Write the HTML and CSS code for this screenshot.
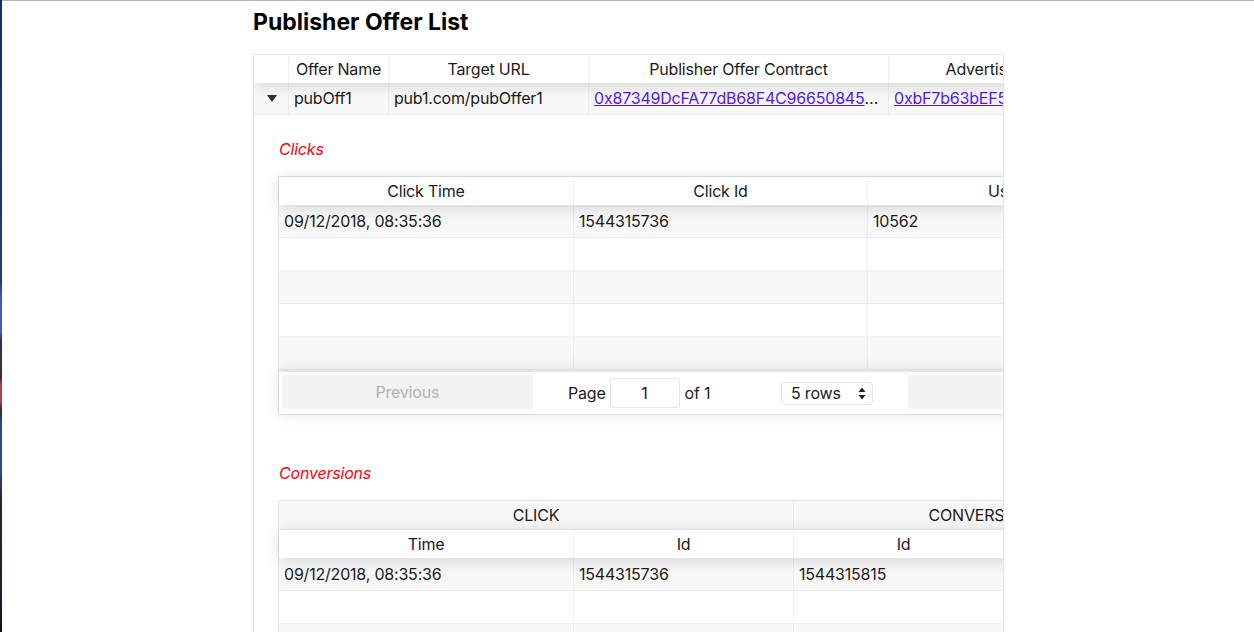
FILE: index.html
```html
<!DOCTYPE html>
<html>
<head>
<meta charset="utf-8">
<title>Publisher Offer List</title>
<link rel="stylesheet" href="styles.css">
</head>
<body>
<div class="screen">
  <div class="wall"></div>
  <div class="window">
    <h2 class="title">Publisher Offer List</h2>
    <div class="rt outer">
      <div class="rt-inner outer-inner">
        <div class="thead">
          <div class="th c-exp"></div>
          <div class="th c-name">Offer Name</div>
          <div class="th c-url">Target URL</div>
          <div class="th c-con">Publisher Offer Contract</div>
          <div class="th c-adv">Advertiser Offer Contract</div>
        </div>
        <div class="tr-group">
          <div class="tr odd outer-row">
            <div class="td c-exp"><span class="expander"></span></div>
            <div class="td c-name">pubOff1</div>
            <div class="td c-url">pub1.com/pubOffer1</div>
            <div class="td c-con"><a class="addr" href="#">0x87349DcFA77dB68F4C966508456e3a2B1c9F0d7E</a></div>
            <div class="td c-adv"><a class="addr" href="#">0xbF7b63bEF5a8C21d04E9b3F76a1D2c8e90B4f1A3</a></div>
          </div>
          <div class="sub">
            <div class="label first">Clicks</div>
            <div class="rt subtable clicks">
              <div class="thead">
                <div class="th k1">Click Time</div>
                <div class="th k2">Click Id</div>
                <div class="th k3">User Id</div>
              </div>
              <div class="tbody">
                <div class="tr odd"><div class="td k1">09/12/2018, 08:35:36</div><div class="td k2">1544315736</div><div class="td k3">10562</div></div>
                <div class="tr"><div class="td k1">&nbsp;</div><div class="td k2">&nbsp;</div><div class="td k3">&nbsp;</div></div>
                <div class="tr odd"><div class="td k1">&nbsp;</div><div class="td k2">&nbsp;</div><div class="td k3">&nbsp;</div></div>
                <div class="tr"><div class="td k1">&nbsp;</div><div class="td k2">&nbsp;</div><div class="td k3">&nbsp;</div></div>
                <div class="tr odd"><div class="td k1">&nbsp;</div><div class="td k2">&nbsp;</div><div class="td k3">&nbsp;</div></div>
              </div>
              <div class="pagination">
                <div class="pg-prev"><div class="btn">Previous</div></div>
                <div class="pg-center">
                  <div class="page-info">Page <input class="page-jump" type="text" value="1" readonly> of 1</div>
                  <div class="page-size">
                    <div class="fake-select">5 rows
                      <svg class="updown" width="8" height="13" viewBox="0 0 8 13"><path d="M4 0.5 L7.5 5 L0.5 5 Z M4 12.5 L7.5 8 L0.5 8 Z" fill="#222"/></svg>
                    </div>
                  </div>
                </div>
                <div class="pg-next"><div class="btn">Next</div></div>
              </div>
            </div>

            <div class="label second">Conversions</div>
            <div class="rt subtable conv">
              <div class="thead groups">
                <div class="th g1">CLICK</div>
                <div class="th g2">CONVERSION</div>
              </div>
              <div class="thead">
                <div class="th v1">Time</div>
                <div class="th v2">Id</div>
                <div class="th v3">Id</div>
                <div class="th v4">Amount</div>
              </div>
              <div class="tbody">
                <div class="tr odd"><div class="td v1">09/12/2018, 08:35:36</div><div class="td v2">1544315736</div><div class="td v3">1544315815</div><div class="td v4">&nbsp;</div></div>
                <div class="tr"><div class="td v1">&nbsp;</div><div class="td v2">&nbsp;</div><div class="td v3">&nbsp;</div><div class="td v4">&nbsp;</div></div>
                <div class="tr odd"><div class="td v1">&nbsp;</div><div class="td v2">&nbsp;</div><div class="td v3">&nbsp;</div><div class="td v4">&nbsp;</div></div>
                <div class="tr"><div class="td v1">&nbsp;</div><div class="td v2">&nbsp;</div><div class="td v3">&nbsp;</div><div class="td v4">&nbsp;</div></div>
              </div>
            </div>
          </div>
        </div>
      </div>
    </div>
  </div>
</div>
</body>
</html>
```

FILE: styles.css
```css
* { box-sizing: border-box; }
html, body { margin: 0; padding: 0; }
body {
  font-family: Inter, "Liberation Sans", sans-serif;
  font-size: 16px;
  letter-spacing: -0.2px;
  color: #1a1a1a;
  background: #fff;
  overflow: hidden;
}
.screen {
  display: flex;
  height: 632px;
  overflow: hidden;
}
.wall {
  flex: none;
  width: 2px;
  background: linear-gradient(to bottom,
    #1b2b66 0px, #22387a 280px, #3b62ad 300px, #3b62ad 333px,
    #3b2c48 340px, #3b2c48 378px, #b4444e 385px, #b4444e 400px,
    #35283f 410px, #2b4b84 425px, #2b4b84 470px, #2e2035 500px,
    #221a28 600px, #111 632px);
}
.window {
  flex: 1;
  min-width: 0;
  border-top: 1px solid #b4b4b4;
  padding-left: 251px;
  overflow: hidden;
}
.title {
  margin: 7px 0 17px;
  font-size: 23px;
  line-height: 29px;
  font-weight: 700;
  letter-spacing: 0;
  color: #000;
}

/* generic table */
.rt {
  border: 1px solid rgba(0,0,0,0.1);
  background: #fff;
}
.outer {
  width: 751px;
  height: 700px;
  overflow: hidden;
}
.outer-inner { width: 1300px; }
.thead {
  display: flex;
  position: relative;
  z-index: 2;
  box-shadow: 0 2px 15px 0 rgba(0,0,0,0.15);
  background: #fff;
}
.thead.groups {
  box-shadow: none;
  background: #f7f7f7;
  border-bottom: 1px solid rgba(0,0,0,0.05);
  z-index: 1;
}
.th {
  flex: none;
  padding: 5px;
  line-height: 18px;
  text-align: center;
  white-space: nowrap;
  overflow: hidden;
  border-right: 1px solid rgba(0,0,0,0.05);
}
.tr {
  display: flex;
}
.tr.odd { background: rgba(0,0,0,0.03); }
.td {
  flex: none;
  padding: 7px 5px;
  line-height: 18px;
  white-space: nowrap;
  overflow: hidden;
  text-overflow: ellipsis;
  border-right: 1px solid rgba(0,0,0,0.05);
}
.outer-row { border-bottom: 1px solid rgba(0,0,0,0.05); }
.outer-row .td { padding: 6px 5px 7px; }
.tbody .tr { border-bottom: 1px solid rgba(0,0,0,0.05); }

/* outer columns */
.c-exp { width: 35px; display: flex; align-items: center; justify-content: center; }
.c-name { width: 100px; }
.c-url { width: 200px; }
.c-con { width: 300px; }
.c-adv { width: 300px; }
.expander {
  display: block;
  width: 0; height: 0;
  border-left: 5px solid transparent;
  border-right: 5px solid transparent;
  border-top: 7px solid rgba(0,0,0,0.8);
  margin-left: 1px;
}
.addr { color: #5416f2; text-decoration: underline; }

/* sub component */
.sub { padding-left: 24px; }
.label {
  color: #ff0010;
  font-style: italic;
  line-height: 18px;
  padding-left: 1px;
}
.label.first { margin: 25px 0 18px; }
.label.second { margin: 49px 0 18px; }

.subtable.clicks { width: 885px; }
.k1 { width: 295px; }
.k2 { width: 294px; }
.k3 { width: 294px; }

.subtable.conv { width: 891px; }
.g1 { width: 515px; }
.g2 { width: 374px; }
.v1 { width: 295px; }
.v2 { width: 220px; }
.v3 { width: 220px; }
.v4 { width: 154px; }

/* pagination */
.pagination {
  display: flex;
  position: relative;
  z-index: 1;
  padding: 3px;
  border-top: 2px solid rgba(0,0,0,0.1);
  box-shadow: 0 0 15px 0 rgba(0,0,0,0.1);
  background: #fff;
}
.pg-prev, .pg-next { flex: 1; display: flex; }
.pg-center {
  flex: 1.5;
  display: flex;
  align-items: center;
  justify-content: space-around;
}
.btn {
  width: 100%;
  height: 34px;
  line-height: 34px;
  text-align: center;
  border-radius: 3px;
  background: #f2f2f2;
  color: #b3b3b3;
}
.page-info {
  margin: 3px 10px;
  display: flex;
  align-items: center;
  white-space: nowrap;
}
.page-jump {
  width: 70px;
  height: 30px;
  margin: 0 5px 0 4px;
  padding: 5px 7px;
  border: 1px solid rgba(0,0,0,0.1);
  border-radius: 3px;
  font: inherit;
  letter-spacing: inherit;
  color: #1a1a1a;
  text-align: center;
  background: #fff;
  outline: none;
}
.page-size { margin: 3px 10px; }
.fake-select {
  width: 92px;
  height: 23px;
  display: flex;
  align-items: center;
  justify-content: space-between;
  padding: 0 6px 0 9px;
  border: 1px solid rgba(0,0,0,0.1);
  border-radius: 4px;
  line-height: 21px;
  white-space: nowrap;
}
.updown { display: block; }
```
